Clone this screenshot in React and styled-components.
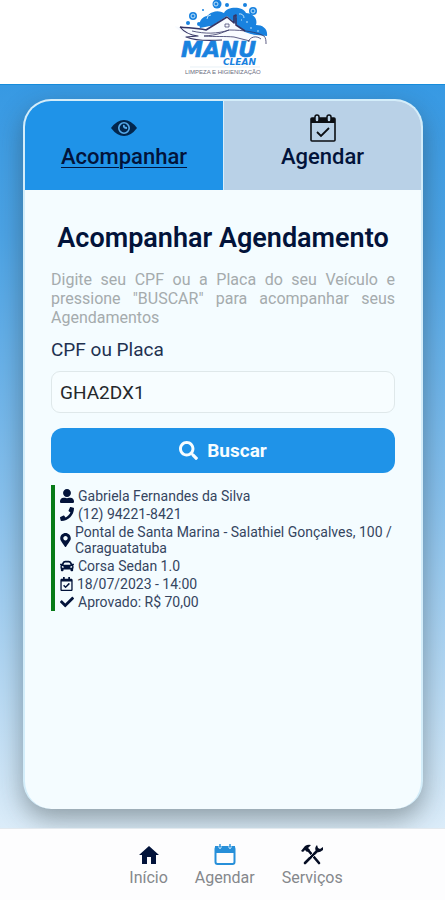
import React, { useState } from "react";
import styled, { createGlobalStyle } from "styled-components";
import {
  FaUserAlt,
  FaPhone,
  FaMapMarkerAlt,
  FaCar,
  FaRegCalendarCheck,
  FaCheck,
  FaSearch,
} from "react-icons/fa";

const GlobalStyle = createGlobalStyle`
  *, *::before, *::after { box-sizing: border-box; }
  body { margin: 0; font-family: Roboto, "Liberation Sans", sans-serif; color: #02133a; }
  h1, p, ul { margin: 0; padding: 0; }
  button, input { font-family: inherit; }
`;

const Page = styled.div`
  display: flex;
  flex-direction: column;
  min-height: 100vh;
`;

const Header = styled.header`
  display: flex;
  justify-content: center;
  height: 84px;
  background: #fff;
`;

const Main = styled.main`
  flex: 1;
  display: flex;
  padding: 14px 22px 19px 23px;
  border-top: 1px solid #168cdb;
  background: linear-gradient(180deg, #3799e3 0%, #4ca3e5 20%, #86c0ed 55%, #dbecf9 100%);
`;

const Card = styled.section`
  flex: 1;
  border: 2px solid #d3edfa;
  border-bottom: 0;
  border-radius: 28px;
  background: #f4fcff;
  overflow: hidden;
  box-shadow: 0 10px 26px rgba(40, 50, 50, 0.42);
`;

const Tabs = styled.div`
  display: grid;
  grid-template-columns: 1fr 1fr;
  height: 89px;
`;

const Tab = styled.button`
  display: flex;
  flex-direction: column;
  align-items: center;
  padding: 12px 0 0;
  border: 0;
  border-left: ${(p) => (p.$divided ? "1px solid #d8eefb" : "0")};
  background: ${(p) => (p.$active ? "#1f93e8" : "#b9d1e7")};
  color: #02133a;
  font-size: 22px;
  line-height: 28px;
  font-weight: 500;
  text-decoration: ${(p) => (p.$active ? "underline" : "none")};
  text-decoration-thickness: 1px;
  text-underline-offset: 3px;
  cursor: pointer;

  svg { height: 30px; }
`;

const Form = styled.form`
  display: flex;
  flex-direction: column;
  padding: 30px 26px 12px;
`;

const Title = styled.h1`
  text-align: center;
  font-size: 27px;
  line-height: 36px;
  font-weight: 600;
  white-space: nowrap;
`;

const Hint = styled.p`
  margin-top: 14px;
  color: #a5abad;
  font-size: 16px;
  line-height: 19px;
  text-align: justify;
`;

const Label = styled.label`
  margin-top: 10px;
  color: #1e3150;
  font-size: 19px;
  line-height: 26px;
`;

const Field = styled.input`
  width: 100%;
  height: 42px;
  margin-top: 8px;
  padding: 0 8px;
  border: 1px solid #dfe8ea;
  border-radius: 9px;
  background: #f7fdff;
  color: #24282c;
  font-size: 19px;
`;

const SearchButton = styled.button`
  display: flex;
  align-items: center;
  justify-content: center;
  gap: 9px;
  height: 45px;
  margin-top: 15px;
  border: 0;
  border-radius: 12px;
  background: #1f93e8;
  color: #f7fdff;
  font-size: 19px;
  font-weight: 700;
  cursor: pointer;
`;

const Details = styled.ul`
  margin: 0 26px;
  padding: 2px 0 0 5px;
  border-left: 4px solid #087b18;
  list-style: none;
`;

const Detail = styled.li`
  display: flex;
  align-items: center;
  gap: 4px;
  padding: 1px 0;
  color: #35455f;
  font-size: 14px;
  line-height: 16px;

  svg {
    flex: none;
    width: ${(p) => p.$iconWidth || 14}px;
    height: 14px;
    color: #02133a;
  }
`;

const Nav = styled.nav`
  display: flex;
  justify-content: center;
  gap: 27px;
  height: 72px;
  padding: 14px 0 0 27px;
  border-top: 1px solid #e3e9ee;
  background: #fdfdfe;
`;

const NavLink = styled.a`
  display: flex;
  flex-direction: column;
  align-items: center;
  color: #85888c;
  font-size: 16px;
  line-height: 22px;
  text-decoration: none;

  svg { height: 24px; }
`;

function Logo() {
  return (
    <svg width="96" height="78" viewBox="175 0 96 78" role="img" aria-label="Manu Clean">
      <g fill="#1982df">
        <path d="M200 28a9 9 0 0 1 7-12 14 14 0 0 1 17-3c3-7 19-7 22 0 7 0 12 6 10 12 7 0 12 4 11 11l-20-2-37-8z" />
        <circle cx="217" cy="4" r="4.5" />
        <circle cx="227" cy="5" r="2" />
        <circle cx="227" cy="13" r="2" />
        <circle cx="245" cy="5" r="2" />
        <circle cx="253" cy="11" r="4" />
        <circle cx="193" cy="16" r="4" />
        <circle cx="188" cy="23" r="2" />
        <circle cx="199" cy="24" r="2" />
        <circle cx="203" cy="10" r="1" />
      </g>
      <g fill="none" stroke="#bde2fb" strokeWidth="1">
        <circle cx="216" cy="4" r="2" />
        <circle cx="253" cy="11" r="2" />
        <circle cx="193" cy="16" r="2" />
        <path d="M207 19a4 4 0 0 1 4-4M239 14a4 4 0 0 1 5 4M236 17h1M246 22h2M250 28h2M241 20h1M257 31h2" />
      </g>
      <path d="M180 27c8 1 17 1 27 2l20-13 18 16 12 4-14 5-27-2c-16 1-27 0-36-3 4-1 9-1 12-1-8-1-13-4-18-9z" fill="#f8fbff" />
      <g fill="none" stroke="#353565" strokeLinejoin="round">
        <path d="M180 27c8 1 17 1 26 3l21-13 7 6v-7l2-1v10l9 6" strokeWidth="1.6" />
        <path d="M180 27c4 5 9 8 18 9l-12 1c10 4 22 4 36 3" strokeWidth="1.2" />
        <path d="M192 31c13 3 25 3 37-1 14 0 28 2 35 6 2 2 2 5 2 8M229 30c-8 3-11 5-25 6 12 1 20 0 30 1l16 4M248 42c2-5 8-7 13-3" strokeWidth="0.8" />
        <path d="M225 24h4v3h-4z" strokeWidth="0.7" />
      </g>
      <text x="181" y="57" fill="#1982df" stroke="#1982df" strokeWidth="0.7" fontFamily="DejaVu Sans" fontWeight="700" fontStyle="italic" fontSize="22">MANU</text>
      <text x="223" y="65" fill="#1982df" fontFamily="DejaVu Sans" fontWeight="700" fontStyle="italic" fontSize="9">CLEAN</text>
      <path d="M190 67h70" stroke="#dce9f2" strokeWidth="0.7" />
      <text x="185" y="74" fill="#6a6c80" fontFamily="Liberation Sans" fontSize="6">LIMPEZA E HIGIENIZAÇÃO</text>
    </svg>
  );
}

function EyeIcon() {
  return (
    <svg width="28" viewBox="0 0 28 30" aria-hidden="true">
      <path d="M1 15Q7 7 14 7t13 8q-6 8-13 8T1 15z" fill="#02264d" />
      <circle cx="14" cy="15" r="5.2" fill="none" stroke="#55aaea" strokeWidth="1.6" />
      <path d="M14 12q-1 3 3 3" fill="none" stroke="#55aaea" strokeWidth="1.8" />
    </svg>
  );
}

function CalendarCheckIcon() {
  return (
    <svg width="28" viewBox="0 0 28 30" aria-hidden="true">
      <rect x="2" y="5" width="24" height="23" rx="1" fill="none" stroke="#0b0e13" strokeWidth="1.6" />
      <path d="M2 5h24v5H2z" fill="#0b0e13" />
      <rect x="6" y="2" width="4" height="7" rx="2" fill="#b9d1e7" stroke="#0b0e13" strokeWidth="1.5" />
      <rect x="18" y="2" width="4" height="7" rx="2" fill="#b9d1e7" stroke="#0b0e13" strokeWidth="1.5" />
      <path d="M8 19l4 4 8-8" fill="none" stroke="#0b0e13" strokeWidth="1.8" />
    </svg>
  );
}

function HomeIcon() {
  return (
    <svg width="22" viewBox="0 0 22 24" aria-hidden="true">
      <path d="M11 3l10 9h-3v9h-5v-7H9v7H4v-9H1z" fill="#02133a" />
    </svg>
  );
}

function CalendarIcon() {
  return (
    <svg width="24" viewBox="0 0 24 24" aria-hidden="true">
      <rect x="2.5" y="4" width="19" height="17" rx="2" fill="none" stroke="#278fd9" strokeWidth="2" />
      <path d="M2 3h20v7H2z" fill="#278fd9" />
      <path d="M6 3v2q1 1 2 0V3M16 3v2q1 1 2 0V3" fill="none" stroke="#c5e5fa" strokeWidth="1" />
      <path d="M7 1v3M17 1v3" stroke="#278fd9" strokeWidth="1.4" />
    </svg>
  );
}

function ToolsIcon() {
  return (
    <svg width="24" viewBox="0 0 24 24" aria-hidden="true">
      <path d="M1 8l4-5q3-2 6-1L8 5l2 2-3 2-2-2-2 2z" fill="#050d24" />
      <path d="M8 7l11 13M5 20L17 8" fill="none" stroke="#050d24" strokeWidth="2.6" strokeLinecap="round" />
      <path d="M17 2q-3 3-1 6t7-1V4l-3 2-2-1z" fill="#050d24" />
      <path d="M9 14l4-4M12 15l3-3" stroke="#fdfdfe" strokeWidth="0.7" />
    </svg>
  );
}

const details = [
  { icon: FaUserAlt, text: "Gabriela Fernandes da Silva" },
  { icon: FaPhone, text: "(12) 94221-8421" },
  { icon: FaMapMarkerAlt, iconWidth: 11, text: "Pontal de Santa Marina - Salathiel Gonçalves, 100 / Caraguatatuba" },
  { icon: FaCar, text: "Corsa Sedan 1.0" },
  { icon: FaRegCalendarCheck, iconWidth: 13, text: "18/07/2023 - 14:00" },
  { icon: FaCheck, text: "Aprovado: R$ 70,00" },
];

export default function App() {
  const [tab, setTab] = useState("track");
  const [query, setQuery] = useState("GHA2DX1");

  return (
    <Page>
      <GlobalStyle />
      <Header>
        <Logo />
      </Header>
      <Main>
        <Card>
          <Tabs>
            <Tab type="button" aria-pressed={tab === "track"} $active={tab === "track"} onClick={() => setTab("track")}>
              <EyeIcon />
              Acompanhar
            </Tab>
            <Tab type="button" aria-pressed={tab === "book"} $active={tab === "book"} $divided onClick={() => setTab("book")}>
              <CalendarCheckIcon />
              Agendar
            </Tab>
          </Tabs>
          <Form onSubmit={(e) => e.preventDefault()}>
            <Title>Acompanhar Agendamento</Title>
            <Hint>
              Digite seu CPF ou a Placa do seu Veículo e pressione "BUSCAR" para acompanhar seus Agendamentos
            </Hint>
            <Label htmlFor="query">CPF ou Placa</Label>
            <Field id="query" value={query} onChange={(e) => setQuery(e.target.value)} />
            <SearchButton type="submit">
              <FaSearch aria-hidden="true" />
              Buscar
            </SearchButton>
          </Form>
          <Details>
            {details.map(({ icon: Icon, iconWidth, text }) => (
              <Detail key={text} $iconWidth={iconWidth}>
                <Icon aria-hidden="true" />
                <span>{text}</span>
              </Detail>
            ))}
          </Details>
        </Card>
      </Main>
      <Nav>
        <NavLink href="#inicio">
          <HomeIcon />
          Início
        </NavLink>
        <NavLink href="#agendar">
          <CalendarIcon />
          Agendar
        </NavLink>
        <NavLink href="#servicos">
          <ToolsIcon />
          Serviços
        </NavLink>
      </Nav>
    </Page>
  );
}
